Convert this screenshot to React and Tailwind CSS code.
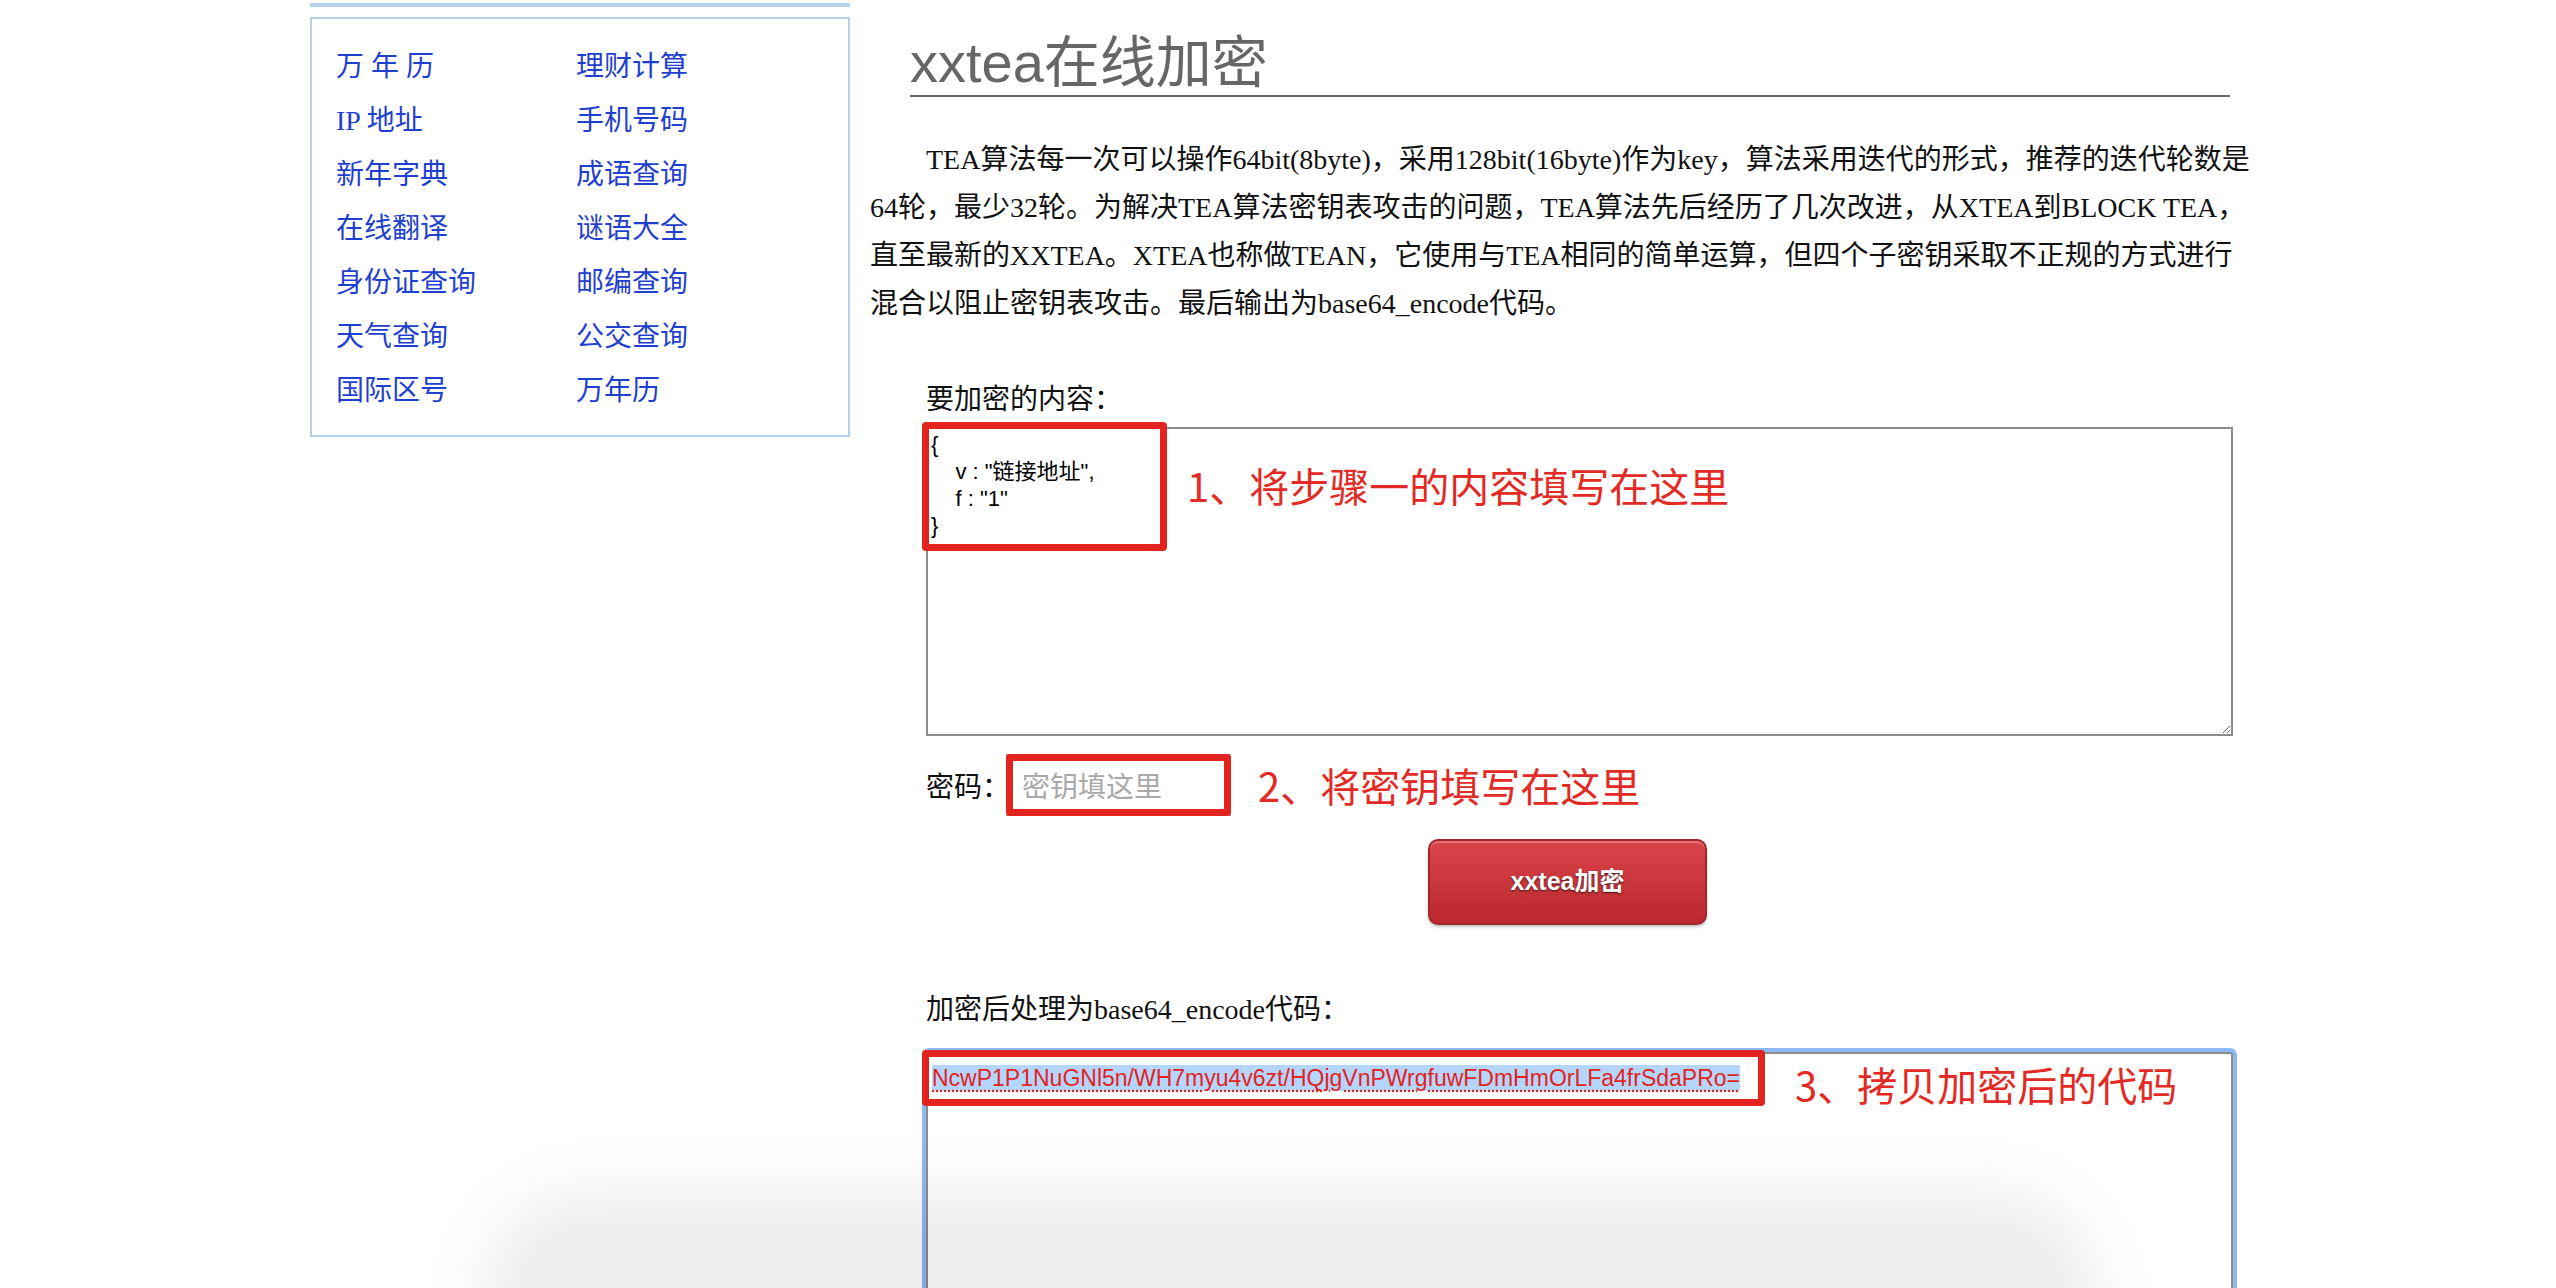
const serif = "font-['Liberation_Serif','Noto_Sans_CJK_SC',serif]";
const sans = "font-['Liberation_Sans','Noto_Sans_CJK_SC',sans-serif]";
const cjk = "font-['Noto_Sans_CJK_SC','Liberation_Sans',sans-serif]";

const links = [
  ['万 年 历', '理财计算'],
  ['IP 地址', '手机号码'],
  ['新年字典', '成语查询'],
  ['在线翻译', '谜语大全'],
  ['身份证查询', '邮编查询'],
  ['天气查询', '公交查询'],
  ['国际区号', '万年历'],
];

function Note({ children, className = '' }) {
  return (
    <span className={`${cjk} text-[40px] leading-[48px] text-[#e32a24] whitespace-nowrap ${className}`}>
      {children}
    </span>
  );
}

function RedBox({ className }) {
  return <div className={`pointer-events-none absolute border-[7px] border-[#e3241e] rounded-[4px] ${className}`} />;
}

function SideNav() {
  return (
    <aside className="w-[540px] shrink-0 pt-[3px]">
      <div className="h-[4px] bg-[#b4d2ea]" />
      <div className="mt-[10px] border-2 border-[#b4d2ea] pt-[21px] pb-[17px] pl-[24px]">
        <ul className={`grid grid-cols-[240px_1fr] auto-rows-[54px] ${serif} text-[28px] leading-[54px]`}>
          {links.flat().map((name, i) => (
            <li key={i}>
              <a href="#" className="text-[#1f3fcf] whitespace-pre">
                {name}
              </a>
            </li>
          ))}
        </ul>
      </div>
    </aside>
  );
}

function App() {
  return (
    <div className="relative h-[1288px] overflow-hidden bg-white">
      <div className="flex gap-[20px] pl-[310px]">
        <SideNav />

        <main className="w-[1400px] shrink-0">
          <h1 className={`mx-[40px] mt-[35px] pb-[4px] border-b-2 border-[#6b6b6b] ${sans} text-[56px] leading-[56px] font-normal text-[#666]`}>
            xxtea在线加密
          </h1>

          <p className={`mt-[39px] w-[1384px] indent-[56px] ${serif} text-[28px] leading-[48px] text-[#111]`}>
            TEA算法每一次可以操作64bit(8byte)，采用128bit(16byte)作为key，算法采用迭代的形式，推荐的迭代轮数是64轮，最少32轮。为解决TEA算法密钥表攻击的问题，TEA算法先后经历了几次改进，从XTEA到BLOCK TEA，直至最新的XXTEA。XTEA也称做TEAN，它使用与TEA相同的简单运算，但四个子密钥采取不正规的方式进行混合以阻止密钥表攻击。最后输出为base64_encode代码。
          </p>

          <form className={`ml-[56px] mt-[48px] ${serif} text-[28px] text-[#111]`}>
            <label className="block leading-[48px]">要加密的内容：</label>
            <div className="relative mt-[3px] w-[1307px]">
              <textarea
                className={`block w-[1307px] h-[309px] border-2 border-[#8c8c8c] pl-[3px] pt-[2px] ${sans} text-[22px] leading-[27px] text-black`}
                defaultValue={'{\n    v : "链接地址",\n    f : "1"\n}'}
              />
              <RedBox className="-left-[4px] -top-[5px] w-[245px] h-[129px]" />
              <Note className="absolute left-[261px] top-[34px]">1、将步骤一的内容填写在这里</Note>
            </div>

            <div className="mt-[18px] flex items-center h-[62px]">
              <span className="w-[80px] pt-[6px] leading-[48px] whitespace-nowrap">密码：</span>
              <div className="relative w-[225px] h-[62px]">
                <input
                  type="text"
                  placeholder="密钥填这里"
                  className={`w-full h-full border-2 border-[#9a9a9a] px-[14px] ${cjk} text-[28px] placeholder:text-[#a9a9a9]`}
                />
                <RedBox className="inset-0" />
              </div>
              <Note className="ml-[27px]">2、将密钥填写在这里</Note>
            </div>

            <button
              type="button"
              className={`mt-[23px] ml-[502px] block w-[279px] h-[86px] rounded-[10px] border-2 border-[#a3262a] bg-gradient-to-b from-[#d9444a] to-[#ba282e] shadow-[inset_0_2px_0_rgba(255,255,255,0.25),0_2px_3px_rgba(0,0,0,0.25)] ${sans} text-[25px] font-bold text-white [text-shadow:0_1px_2px_rgba(0,0,0,0.7)]`}
            >
              xxtea加密
            </button>

            <label className="block mt-[61px] leading-[48px]">加密后处理为base64_encode代码：</label>
            <div className="relative mt-[18px] w-[1307px]">
              <div className="w-[1307px] h-[309px] rounded-[3px] border-2 border-[#8c8c8c] ring-4 ring-[#8db7f5] pl-[4px] pt-[2px] bg-white">
                <span className={`${sans} text-[23px] leading-[27px] text-[#e3231c] bg-[#b4d5fd] underline decoration-dotted decoration-[#e3231c] underline-offset-4`}>
                  NcwP1P1NuGNl5n/WH7myu4v6zt/HQjgVnPWrgfuwFDmHmOrLFa4frSdaPRo=
                </span>
              </div>
              <RedBox className="-left-[4px] -top-[2px] w-[843px] h-[56px]" />
              <Note className="absolute left-[869px] top-[8px]">3、拷贝加密后的代码</Note>
            </div>
          </form>
        </main>
      </div>

      <div className="pointer-events-none absolute left-[480px] top-[1190px] w-[1620px] h-[220px] rounded-[110px] bg-black/[0.07] blur-[30px]" />
    </div>
  );
}

export default App;
